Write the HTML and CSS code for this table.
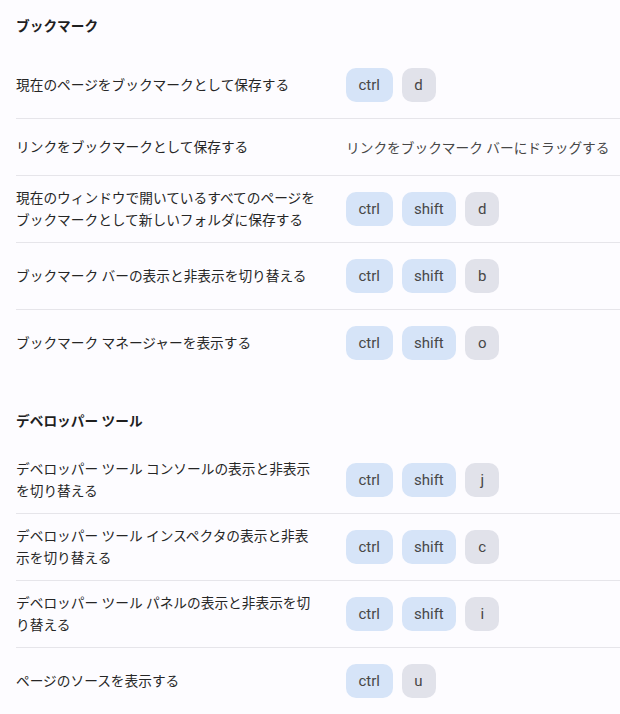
FILE: index.html
```html
<!DOCTYPE html>
<html lang="ja">
<head>
<meta charset="utf-8">
<title>ショートカット</title>
<link rel="stylesheet" href="styles.css">
</head>
<body>
<main class="page">
  <section class="section">
    <h2 class="section-title">ブックマーク</h2>
    <div class="row">
      <div class="desc">現在のページをブックマークとして保存する</div>
      <div class="keys"><span class="key mod">ctrl</span><span class="key">d</span></div>
    </div>
    <div class="row text-row">
      <div class="desc">リンクをブックマークとして保存する</div>
      <div class="keys hint">リンクをブックマーク バーにドラッグする</div>
    </div>
    <div class="row">
      <div class="desc">現在のウィンドウで開いているすべてのページをブックマークとして新しいフォルダに保存する</div>
      <div class="keys"><span class="key mod">ctrl</span><span class="key mod">shift</span><span class="key">d</span></div>
    </div>
    <div class="row">
      <div class="desc">ブックマーク バーの表示と非表示を切り替える</div>
      <div class="keys"><span class="key mod">ctrl</span><span class="key mod">shift</span><span class="key">b</span></div>
    </div>
    <div class="row">
      <div class="desc">ブックマーク マネージャーを表示する</div>
      <div class="keys"><span class="key mod">ctrl</span><span class="key mod">shift</span><span class="key">o</span></div>
    </div>
  </section>
  <section class="section">
    <h2 class="section-title">デベロッパー ツール</h2>
    <div class="row">
      <div class="desc">デベロッパー ツール コンソールの表示と非表示を切り替える</div>
      <div class="keys"><span class="key mod">ctrl</span><span class="key mod">shift</span><span class="key">j</span></div>
    </div>
    <div class="row">
      <div class="desc">デベロッパー ツール インスペクタの表示と非表示を切り替える</div>
      <div class="keys"><span class="key mod">ctrl</span><span class="key mod">shift</span><span class="key">c</span></div>
    </div>
    <div class="row">
      <div class="desc">デベロッパー ツール パネルの表示と非表示を切り替える</div>
      <div class="keys"><span class="key mod">ctrl</span><span class="key mod">shift</span><span class="key">i</span></div>
    </div>
    <div class="row">
      <div class="desc">ページのソースを表示する</div>
      <div class="keys"><span class="key mod">ctrl</span><span class="key">u</span></div>
    </div>
  </section>
</main>
</body>
</html>
```
FILE: styles.css
```css
html, body {
  margin: 0;
  padding: 0;
  background: #fdfcff;
}
body {
  font-family: Roboto, "Noto Sans CJK JP", sans-serif;
  color: #1f1f1f;
  font-size: 13.7px;
}
.page {
  padding-left: 16px;
}
.section + .section {
  margin-top: 19px;
}
.section-title {
  margin: 0;
  padding: 16px 0;
  font-size: 13.7px;
  line-height: 20px;
  font-weight: 700;
}
.row {
  display: grid;
  grid-template-columns: 302px 1fr;
  column-gap: 28px;
  align-items: center;
  box-sizing: border-box;
  min-height: 67px;
  padding: 0;
  border-bottom: 1px solid #e6e5ea;
}
.section .row:last-child {
  border-bottom: none;
  min-height: 66px;
}
.row.text-row {
  min-height: 57px;
}
.desc {
  line-height: 22px;
  color: #262626;
}
.keys {
  display: flex;
  gap: 9px;
}
.hint {
  color: #474747;
  white-space: nowrap;
}
.key {
  display: inline-flex;
  align-items: center;
  justify-content: center;
  height: 34px;
  min-width: 34px;
  box-sizing: border-box;
  padding: 0 12px;
  border-radius: 10px;
  background: #e1e2ea;
  color: #474747;
  font-family: Roboto, sans-serif;
  font-size: 15px;
}
.key.mod {
  padding: 0 12.5px;
  background: #d6e4f8;
}
```
